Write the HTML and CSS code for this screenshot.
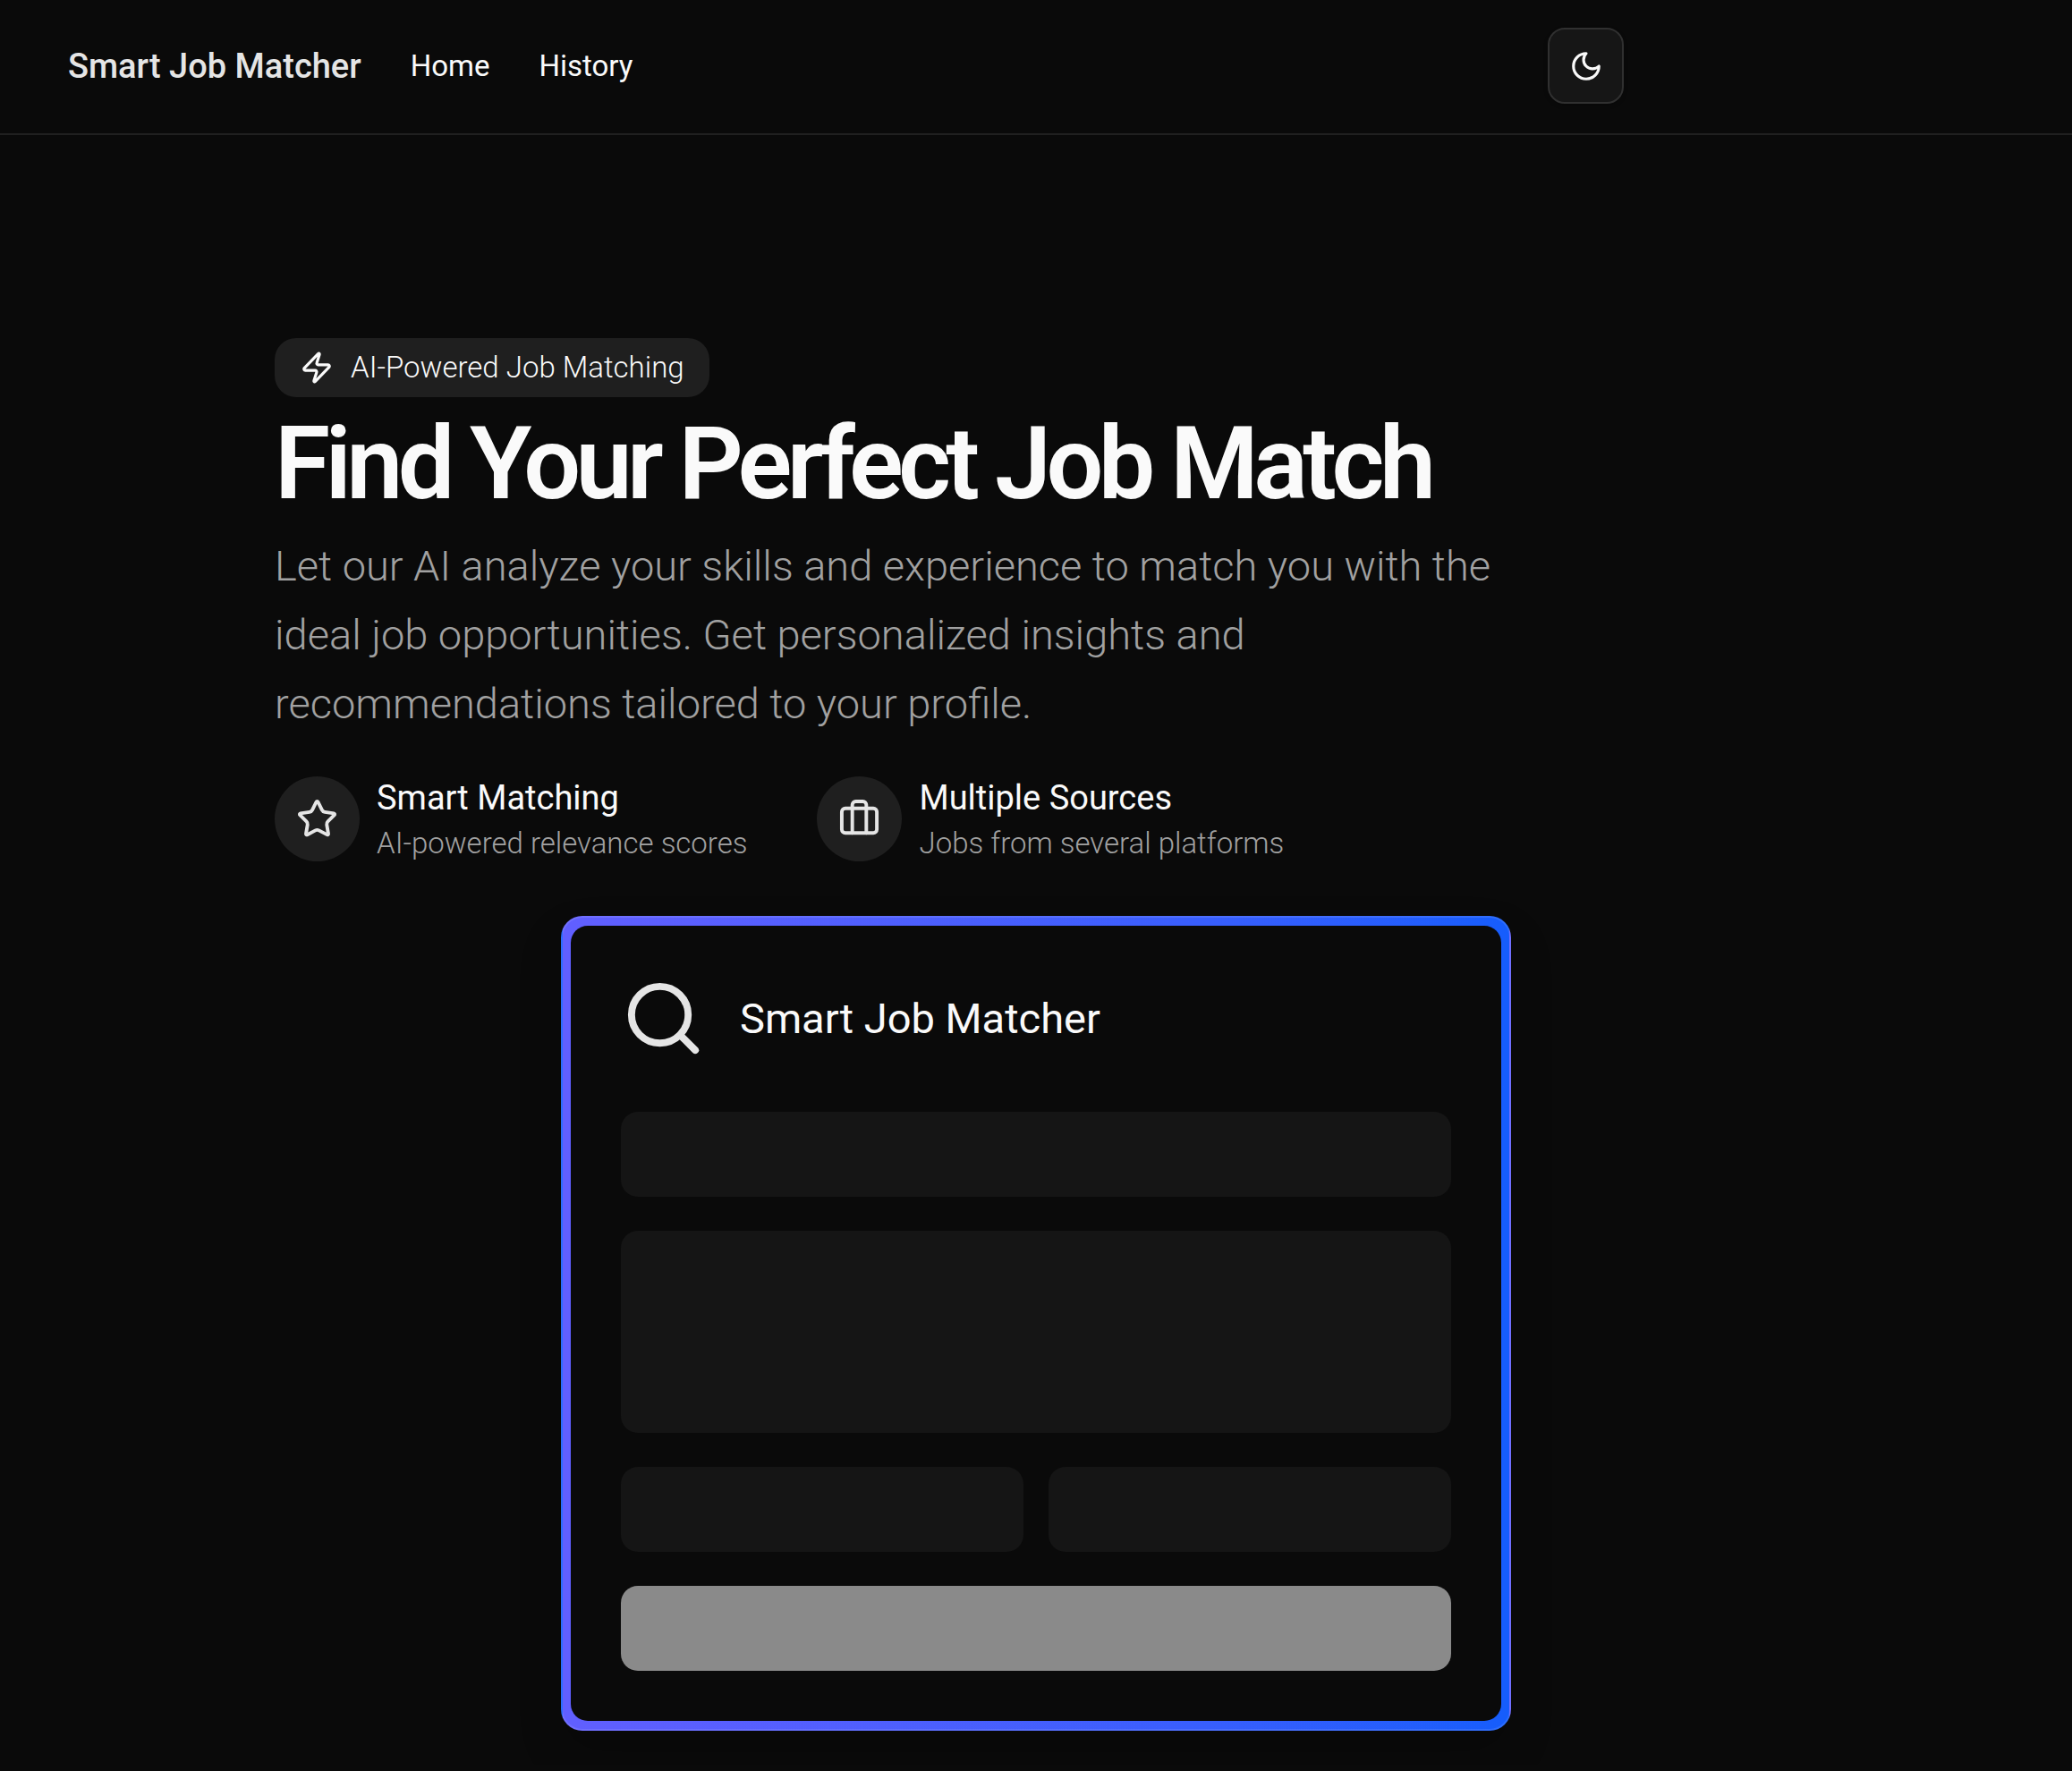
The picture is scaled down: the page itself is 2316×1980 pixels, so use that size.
FILE: index.html
```html
<!DOCTYPE html>
<html lang="en">
<head>
  <meta charset="utf-8">
  <meta name="viewport" content="width=device-width, initial-scale=1">
  <title>Smart Job Matcher</title>
  <link rel="stylesheet" href="styles.css">
</head>
<body>
  <header class="site-header">
    <div class="header-inner">
      <nav class="nav" aria-label="Main">
        <a class="brand" href="#">Smart Job Matcher</a>
        <a class="nav-link" href="#">Home</a>
        <a class="nav-link" href="#history">History</a>
      </nav>
      <button class="theme-toggle" type="button" aria-label="Toggle theme">
        <svg class="icon icon-sm" viewBox="0 0 24 24" aria-hidden="true"><path d="M12 3a6 6 0 0 0 9 9 9 9 0 1 1-9-9Z"/></svg>
      </button>
    </div>
  </header>

  <main class="page">
    <section class="hero">
      <div class="badge">
        <svg class="icon icon-sm" viewBox="0 0 24 24" aria-hidden="true"><path d="M4 14a1 1 0 0 1-.78-1.63l9.9-10.2a.5.5 0 0 1 .86.46l-1.92 6.02A1 1 0 0 0 13 10h7a1 1 0 0 1 .78 1.63l-9.9 10.2a.5.5 0 0 1-.86-.46l1.92-6.02A1 1 0 0 0 11 14z"/></svg>
        <span>AI-Powered Job Matching</span>
      </div>
      <h1 class="headline">Find Your Perfect Job Match</h1>
      <p class="lead">Let our AI analyze your skills and experience to match you with the ideal job opportunities. Get personalized insights and recommendations tailored to your profile.</p>
    </section>

    <ul class="features">
      <li class="feature">
        <span class="feature-icon">
          <svg class="icon icon-md" viewBox="0 0 24 24" aria-hidden="true"><path d="M11.525 2.295a.53.53 0 0 1 .95 0l2.31 4.679a2.123 2.123 0 0 0 1.595 1.16l5.166.756a.53.53 0 0 1 .294.904l-3.736 3.638a2.123 2.123 0 0 0-.611 1.878l.882 5.14a.53.53 0 0 1-.771.56l-4.618-2.428a2.122 2.122 0 0 0-1.973 0L6.396 21.01a.53.53 0 0 1-.77-.56l.881-5.139a2.122 2.122 0 0 0-.611-1.879L2.16 9.795a.53.53 0 0 1 .294-.906l5.165-.755a2.122 2.122 0 0 0 1.597-1.16z"/></svg>
        </span>
        <div>
          <h2 class="feature-title">Smart Matching</h2>
          <p class="feature-text">AI-powered relevance scores</p>
        </div>
      </li>
      <li class="feature">
        <span class="feature-icon">
          <svg class="icon icon-md" viewBox="0 0 24 24" aria-hidden="true"><path d="M16 20V4a2 2 0 0 0-2-2h-4a2 2 0 0 0-2 2v16"/><rect width="20" height="14" x="2" y="6" rx="2"/></svg>
        </span>
        <div>
          <h2 class="feature-title">Multiple Sources</h2>
          <p class="feature-text">Jobs from several platforms</p>
        </div>
      </li>
    </ul>

    <section class="preview" aria-label="Smart Job Matcher preview">
      <div class="preview-body">
        <div class="preview-head">
          <svg class="icon icon-lg" viewBox="0 0 24 24" aria-hidden="true"><circle cx="11" cy="11" r="8"/><path d="m21 21-4.3-4.3"/></svg>
          <h2 class="preview-title">Smart Job Matcher</h2>
        </div>
        <div class="placeholders" aria-hidden="true">
          <div class="placeholder"></div>
          <div class="placeholder placeholder-tall"></div>
          <div class="placeholder-pair">
            <div class="placeholder"></div>
            <div class="placeholder"></div>
          </div>
          <div class="placeholder placeholder-action"></div>
        </div>
      </div>
    </section>
  </main>
</body>
</html>
```

FILE: styles.css
```css
:root {
  --background: #0a0a0a;
  --foreground: #fafafa;
  --primary: #e5e5e5;
  --muted: #a1a1a1;
  --surface: #1f1f1f;
  --line: #202020;
  --radius: 19px;
}

*,
*::before,
*::after {
  box-sizing: border-box;
}

body,
h1,
h2,
p,
ul {
  margin: 0;
  padding: 0;
}

body {
  background: var(--background);
  color: var(--foreground);
  font-family: Roboto, "Liberation Sans", sans-serif;
  font-size: 38px;
  font-weight: 300;
  line-height: 56px;
}

.icon {
  flex: none;
  fill: none;
  stroke: currentColor;
  stroke-width: 2;
  stroke-linecap: round;
  stroke-linejoin: round;
}

.icon-sm {
  width: 38px;
  height: 38px;
}

.icon-md {
  width: 47px;
  height: 47px;
}

.icon-lg {
  width: 95px;
  height: 95px;
  color: var(--primary);
}

/* Header */

.site-header {
  border-bottom: 2px solid var(--line);
}

.header-inner {
  display: flex;
  align-items: center;
  justify-content: space-between;
  max-width: 1891px;
  padding: 31px 76px 33px;
}

.nav {
  display: flex;
  align-items: center;
  gap: 55px;
}

.brand,
.nav-link {
  color: var(--foreground);
  text-decoration: none;
}

.brand {
  color: var(--primary);
  font-weight: 500;
}

.nav-link {
  font-size: 33px;
  font-weight: 400;
  line-height: 46px;
}

.theme-toggle {
  display: flex;
  align-items: center;
  justify-content: center;
  width: 85px;
  height: 85px;
  padding: 0;
  border: 2px solid #303030;
  border-radius: var(--radius);
  background: #161616;
  color: var(--foreground);
  box-shadow: 0 2px 5px rgba(0, 0, 0, 0.2);
}

/* Hero */

.page {
  max-width: 1702px;
  margin: 0 auto;
  padding: 227px 0 38px;
}

.hero {
  display: flex;
  flex-direction: column;
  align-items: flex-start;
  gap: 19px;
}

.badge {
  display: flex;
  align-items: center;
  gap: 19px;
  padding: 10px 28px;
  border-radius: 24px;
  background: var(--surface);
  font-size: 33px;
  line-height: 46px;
}

.headline {
  font-size: 113px;
  font-weight: 600;
  line-height: 112px;
  letter-spacing: -0.05em;
}

.lead {
  max-width: 1416px;
  color: var(--muted);
  font-size: 47px;
  line-height: 77px;
}

/* Features */

.features {
  display: flex;
  flex-wrap: wrap;
  gap: 38px 78px;
  margin-top: 39px;
  list-style: none;
}

.feature {
  display: flex;
  align-items: center;
  gap: 19px;
}

.feature-icon {
  display: flex;
  align-items: center;
  justify-content: center;
  width: 95px;
  height: 95px;
  border-radius: 50%;
  background: var(--surface);
  color: var(--primary);
}

.feature-title {
  font-size: 38px;
  font-weight: 400;
  line-height: 56px;
}

.feature-text {
  color: var(--muted);
  font-size: 33px;
  line-height: 46px;
}

/* Preview card */

.preview {
  max-width: 1062px;
  margin: 58px auto 0;
  padding: 9px;
  border: 2px solid rgba(255, 255, 255, 0.1);
  border-radius: 24px;
  background: linear-gradient(to right in oklab, #615fff, #155dfc);
  box-shadow: 0 24px 48px rgba(0, 0, 0, 0.2);
}

.preview-body {
  padding: 56px;
  border-radius: var(--radius);
  background: var(--background);
}

.preview-head {
  display: flex;
  align-items: center;
  gap: 38px;
  margin-bottom: 57px;
}

.preview-title {
  font-size: 47px;
  font-weight: 400;
  line-height: 66px;
}

.placeholders {
  display: grid;
  gap: 38px;
}

.placeholder {
  height: 95px;
  border-radius: var(--radius);
  background: #151515;
}

.placeholder-tall {
  height: 226px;
}

.placeholder-pair {
  display: grid;
  grid-template-columns: 1fr 1fr;
  gap: 28px;
}

.placeholder-action {
  background: #8a8a8a;
}
```
